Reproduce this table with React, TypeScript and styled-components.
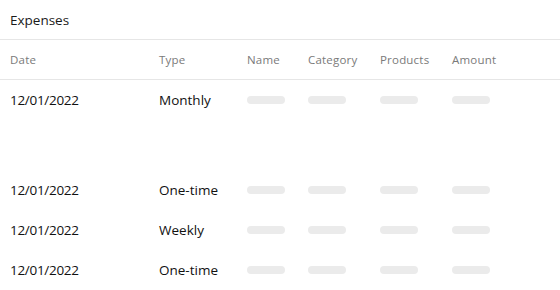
import React from "react";
import styled, { createGlobalStyle } from "styled-components";

const Global = createGlobalStyle`
  html, body { margin: 0; padding: 0; background: #fff; }
  body { font-family: "Open Sans", "Liberation Sans", sans-serif; }
`;

const Panel = styled.div`
  width: 560px;
  height: 290px;
  background: #fff;
  overflow: hidden;
`;

const Title = styled.div`
  height: 39px;
  display: flex;
  align-items: center;
  padding: 0 10px;
  font-size: 13.5px;
  color: #1a1a1a;
  border-bottom: 1px solid #e6e6e6;
`;

const cols = "149px 88px 61px 72px 72px 1fr";

const HeadRow = styled.div`
  display: grid;
  grid-template-columns: ${cols};
  align-items: center;
  height: 39px;
  padding-left: 10px;
  border-bottom: 1px solid #e6e6e6;
  font-size: 11.5px;
  letter-spacing: 0.2px;
  color: #7a7a7a;
`;

const Row = styled.div`
  display: grid;
  grid-template-columns: ${cols};
  align-items: center;
  height: 40px;
  padding-left: 10px;
  font-size: 13.5px;
  color: #111;
`;

const DateCell = styled.span`
  letter-spacing: -0.3px;
`;

const Spacer = styled.div`
  height: 50px;
`;

const Pill = styled.div`
  width: 38px;
  height: 8px;
  border-radius: 4px;
  background: #ebebeb;
`;

const rows = [
  { date: "12/01/2022", type: "Monthly" },
  null,
  { date: "12/01/2022", type: "One-time" },
  { date: "12/01/2022", type: "Weekly" },
  { date: "12/01/2022", type: "One-time" },
];

export default function App() {
  return (
    <Panel>
      <Global />
      <Title>Expenses</Title>
      <HeadRow>
        <span>Date</span>
        <span>Type</span>
        <span>Name</span>
        <span>Category</span>
        <span>Products</span>
        <span>Amount</span>
      </HeadRow>
      {rows.map((r, i) =>
        r ? (
          <Row key={i}>
            <DateCell>{r.date}</DateCell>
            <span>{r.type}</span>
            <Pill />
            <Pill />
            <Pill />
            <Pill />
          </Row>
        ) : (
          <Spacer key={i} />
        )
      )}
    </Panel>
  );
}
